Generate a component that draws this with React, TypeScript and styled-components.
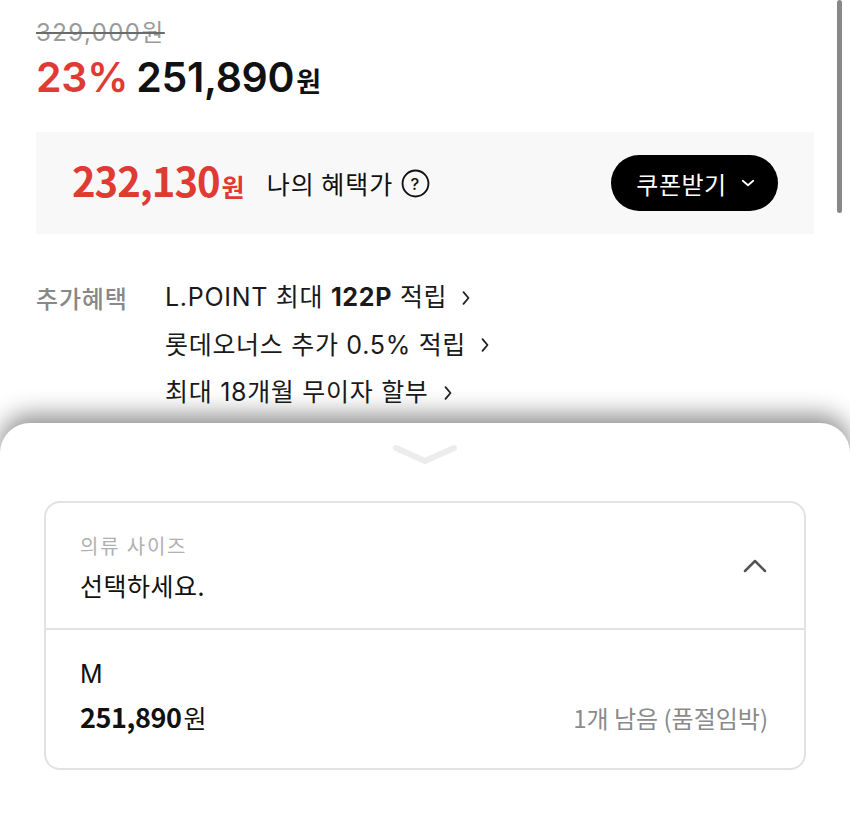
import React from "react";
import styled, { createGlobalStyle } from "styled-components";

const Global = createGlobalStyle`
  html, body { margin: 0; padding: 0; background: #fff; }
  body { font-family: "Noto Sans CJK KR", "Noto Sans", sans-serif; color: #111; overflow: hidden; }
  * { box-sizing: border-box; }
`;

const Page = styled.div`
  position: relative;
  width: 850px;
  height: 829px;
  overflow: hidden;
  background: #fff;
`;

const Content = styled.div`
  padding: 14px 36px 0 36px;
  display: flex;
  flex-direction: column;
`;

const OldPrice = styled.div`
  font-family: "Inter", "Noto Sans CJK KR", sans-serif;
  font-size: 24px;
  line-height: 38px;
  height: 36px;
  color: #9a9a9a;
  text-decoration: line-through;
  text-decoration-color: #6a6a6a;
  text-decoration-thickness: 2px;
  width: fit-content;
  letter-spacing: 1.4px;
`;

const PriceRow = styled.div`
  display: flex;
  align-items: baseline;
  gap: 8px;
  height: 50px;
  line-height: 50px;
  margin-top: 2px;
`;

const Discount = styled.span`
  font-family: "Inter", sans-serif;
  font-size: 41px;
  font-weight: 600;
  color: #e03a35;
  letter-spacing: -0.2px;
`;

const Price = styled.span`
  font-family: "Inter", sans-serif;
  font-size: 41px;
  font-weight: 600;
  color: #111;
  letter-spacing: -0.3px;
`;

const Won = styled.span<{ $size: number }>`
  font-family: "Noto Sans CJK KR", sans-serif;
  font-size: ${(p) => p.$size}px;
  font-weight: 700;
  margin-left: 2px;
  letter-spacing: 0;
`;

const BenefitBox = styled.div`
  margin-top: 30px;
  height: 102px;
  background: #f8f8f8;
  display: flex;
  align-items: center;
  padding: 0 36px;
  gap: 22px;
`;

const BenefitPrice = styled.span`
  font-family: "Noto Sans CJK KR", sans-serif;
  font-size: 40px;
  font-weight: 700;
  color: #e03a35;
  letter-spacing: -1px;
  line-height: 50px;
`;

const BenefitLabel = styled.span`
  display: flex;
  align-items: center;
  gap: 8px;
  font-size: 25px;
  color: #111;
  letter-spacing: 1px;
`;

const Spacer = styled.div`
  flex: 1;
`;

const CouponButton = styled.button`
  height: 56px;
  width: 167px;
  border: none;
  border-radius: 28px;
  background: #000;
  color: #fff;
  font-family: "Noto Sans CJK KR", sans-serif;
  font-size: 24px;
  letter-spacing: 0.5px;
  display: flex;
  align-items: center;
  justify-content: center;
  gap: 12px;
  padding: 0 0 0 4px;
`;

const ExtraSection = styled.div`
  margin-top: 40px;
  display: grid;
  grid-template-columns: 129px 1fr;
`;

const ExtraLabel = styled.div`
  font-size: 24px;
  color: #888;
  line-height: 47px;
  font-weight: 500;
  letter-spacing: 0.8px;
`;

const ExtraList = styled.div`
  display: flex;
  flex-direction: column;
`;

const ExtraItem = styled.div`
  font-family: "Inter", "Noto Sans CJK KR", sans-serif;
  font-size: 25px;
  line-height: 47px;
  height: 47.5px;
  color: #1a1a1a;
  display: flex;
  align-items: center;
  gap: 9px;
  letter-spacing: 0.7px;
  b { font-weight: 700; }
`;

const Scrollbar = styled.div`
  position: absolute;
  top: 0;
  right: 8px;
  width: 5px;
  height: 213px;
  border-radius: 3px;
  background: #888;
`;

const Sheet = styled.div`
  position: absolute;
  left: 0;
  right: 0;
  top: 423px;
  bottom: 0;
  background: #fff;
  border-radius: 30px 30px 0 0;
  box-shadow: 0 -8px 24px rgba(0, 0, 0, 0.45);
  display: flex;
  flex-direction: column;
  align-items: center;
  padding: 20px 44px 0;
`;

const Handle = styled.div`
  height: 22px;
  display: flex;
  justify-content: center;
`;

const SelectBox = styled.div`
  margin-top: 36px;
  width: 100%;
  border: 2px solid #e2e2e2;
  border-radius: 16px;
  display: flex;
  flex-direction: column;
`;

const SelectHeader = styled.div`
  height: 127px;
  display: flex;
  align-items: center;
  padding: 0 34px 0 34px;
  border-bottom: 2px solid #e2e2e2;
`;

const HeaderText = styled.div`
  flex: 1;
  display: flex;
  flex-direction: column;
  gap: 8px;
  margin-top: 2px;
`;

const FieldLabel = styled.div`
  font-size: 20px;
  color: #b0b0b0;
  line-height: 28px;
  letter-spacing: 1.8px;
`;

const FieldValue = styled.div`
  font-size: 25px;
  color: #111;
  line-height: 34px;
  letter-spacing: 0.5px;
`;

const Option = styled.div`
  height: 138px;
  padding: 27px 36px 0 34px;
  display: flex;
  flex-direction: column;
  gap: 8px;
`;

const OptionName = styled.div`
  font-family: "Inter", sans-serif;
  font-size: 25px;
  line-height: 34px;
  color: #111;
`;

const OptionRow = styled.div`
  display: flex;
  align-items: center;
  justify-content: space-between;
`;

const OptionPrice = styled.span`
  font-family: "Noto Sans CJK KR", sans-serif;
  font-size: 27px;
  font-weight: 700;
  letter-spacing: -0.4px;
  color: #111;
  line-height: 36px;
`;

const OptionWon = styled.span`
  font-weight: 400;
  margin-left: 2px;
  font-size: 25px;
`;

const Stock = styled.span`
  font-size: 24px;
  color: #8a8a8a;
  letter-spacing: 0px;
`;

const Chevron = ({ dir, size, color, width = 2 }: { dir: "down" | "right" | "up"; size: number; color: string; width?: number }) => {
  const d =
    dir === "down" ? "M5 9l7 6 7-6" : dir === "up" ? "M4 16l8-8 8 8" : "M9 5l6 7-6 7";
  return (
    <svg width={size} height={size} viewBox="0 0 24 24" fill="none">
      <path d={d} stroke={color} strokeWidth={width} strokeLinecap="round" strokeLinejoin="round" />
    </svg>
  );
};

const QuestionIcon = () => (
  <svg width="29" height="29" viewBox="0 0 28 28" fill="none">
    <circle cx="14" cy="14" r="12.5" stroke="#111" strokeWidth="1.8" />
    <text x="14" y="20" textAnchor="middle" fontSize="16" fontFamily="Inter, sans-serif" fontWeight="500" fill="#111">?</text>
  </svg>
);

export default function App() {
  return (
    <Page>
      <Global />
      <Content>
        <OldPrice>329,000원</OldPrice>
        <PriceRow>
          <Discount>23%</Discount>
          <Price>
            251,890<Won $size={27}>원</Won>
          </Price>
        </PriceRow>
        <BenefitBox>
          <BenefitPrice>
            232,130<Won $size={25}>원</Won>
          </BenefitPrice>
          <BenefitLabel>
            나의 혜택가
            <QuestionIcon />
          </BenefitLabel>
          <Spacer />
          <CouponButton>
            쿠폰받기
            <Chevron dir="down" size={18} color="#fff" width={2.4} />
          </CouponButton>
        </BenefitBox>
        <ExtraSection>
          <ExtraLabel>추가혜택</ExtraLabel>
          <ExtraList>
            <ExtraItem>
              <span>
                L.POINT 최대 <b>122P</b> 적립
              </span>
              <Chevron dir="right" size={20} color="#222" width={2.2} />
            </ExtraItem>
            <ExtraItem>
              <span>롯데오너스 추가 0.5% 적립</span>
              <Chevron dir="right" size={20} color="#222" width={2.2} />
            </ExtraItem>
            <ExtraItem>
              <span>최대 18개월 무이자 할부</span>
              <Chevron dir="right" size={20} color="#222" width={2.2} />
            </ExtraItem>
          </ExtraList>
        </ExtraSection>
      </Content>
      <Scrollbar />
      <Sheet>
        <Handle>
          <svg width="66" height="22" viewBox="0 0 66 22" fill="none">
            <path d="M4 5l29 13 29-13" stroke="#ececec" strokeWidth="6" strokeLinecap="round" strokeLinejoin="round" />
          </svg>
        </Handle>
        <SelectBox>
          <SelectHeader>
            <HeaderText>
              <FieldLabel>의류 사이즈</FieldLabel>
              <FieldValue>선택하세요.</FieldValue>
            </HeaderText>
            <Chevron dir="up" size={30} color="#555" width={2} />
          </SelectHeader>
          <Option>
            <OptionName>M</OptionName>
            <OptionRow>
              <OptionPrice>
                251,890<OptionWon>원</OptionWon>
              </OptionPrice>
              <Stock>1개 남음 (품절임박)</Stock>
            </OptionRow>
          </Option>
        </SelectBox>
      </Sheet>
    </Page>
  );
}
